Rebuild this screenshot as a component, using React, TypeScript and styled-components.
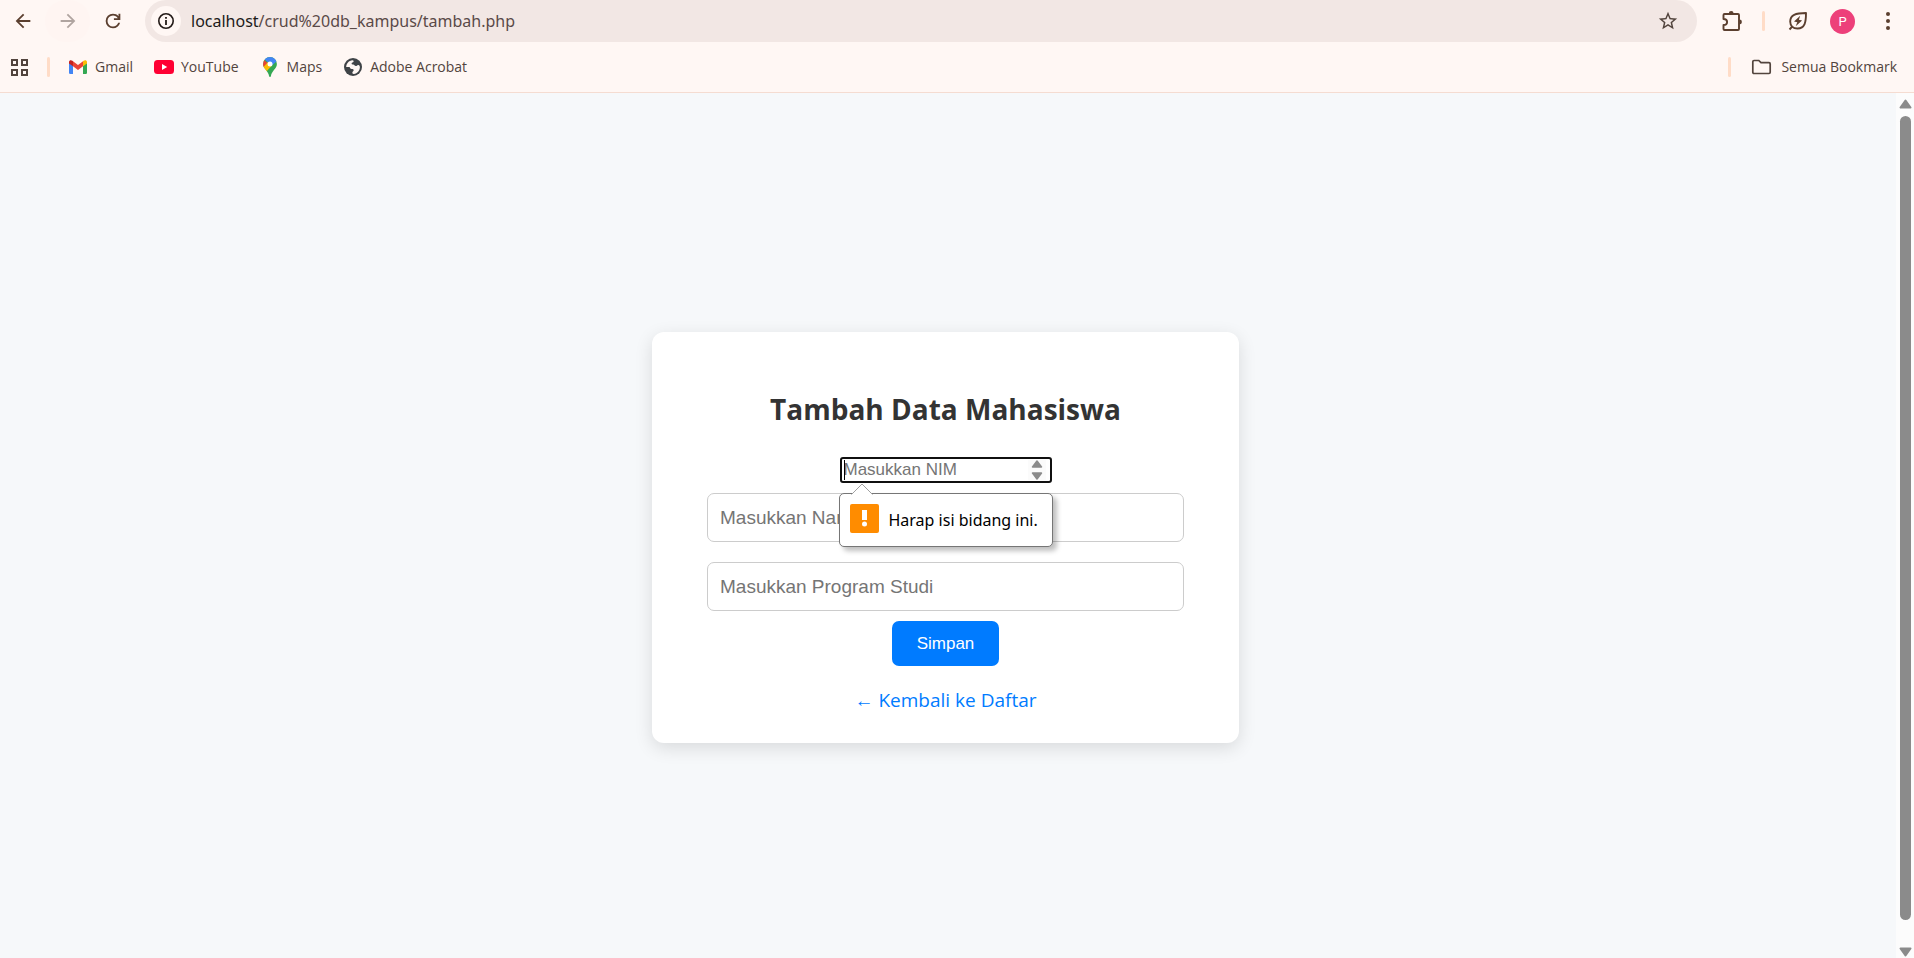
import React from "react";
import styled, { createGlobalStyle } from "styled-components";

const uiFont = '"Open Sans", "Noto Sans", sans-serif';
const chromeFont = '"Noto Sans", "Open Sans", sans-serif';
const formFont = '"Liberation Sans", Arial, sans-serif';

const GlobalStyle = createGlobalStyle`
  *, *::before, *::after { box-sizing: border-box; }
  body { margin: 0; font-family: ${uiFont}; }
  button, input { font: inherit; }
`;

const Window = styled.div`
  display: flex;
  flex-direction: column;
  height: 100vh;
  overflow: hidden;
  background: #f6f8fa;
`;

const BrowserHeader = styled.header`
  flex: none;
  background: #fff7f4;
  border-bottom: 1px solid #f5dcd1;
`;

const Toolbar = styled.div`
  display: flex;
  align-items: center;
  height: 42px;
  padding-right: 4px;
`;

const ToolButton = styled.button`
  display: flex;
  align-items: center;
  justify-content: center;
  width: 45px;
  height: 42px;
  padding: 0;
  border: 0;
  border-radius: 21px;
  background: none;
  color: #5b3f2f;

  &:disabled {
    background: #fff5f2;
    color: #b0a4a0;
  }
`;

const Omnibox = styled.div`
  display: flex;
  flex: 1;
  align-items: center;
  height: 42px;
  margin: 0 12px 0 10px;
  padding: 0 14px 0 6px;
  border-radius: 21px;
  background: #f2e7e4;
`;

const OmniButton = styled.button<{ $fill?: boolean }>`
  display: flex;
  align-items: center;
  justify-content: center;
  width: 30px;
  height: 30px;
  padding: 0;
  border: 0;
  border-radius: 50%;
  background: ${(p) => (p.$fill ? "#fff7f4" : "none")};
  color: ${(p) => (p.$fill ? "#231a17" : "#52443d")};
`;

const UrlText = styled.div`
  flex: 1;
  margin-left: 10px;
  outline: none;
  font-family: ${chromeFont};
  font-size: 16px;
  line-height: 24px;
  color: #5a4a48;
  white-space: nowrap;
`;

const UrlHost = styled.span`
  color: #201a19;
`;

const Divider = styled.span`
  width: 3px;
  height: 20px;
  border-radius: 2px;
  background: #ffdcc7;
`;

const ToolDivider = styled(Divider)`
  margin: 0 10px 0 8px;
`;

const Avatar = styled.span`
  display: flex;
  align-items: center;
  justify-content: center;
  width: 25px;
  height: 25px;
  border-radius: 50%;
  background: #ed407a;
  color: #fff;
  font: 13px/25px Roboto, sans-serif;
`;

const BookmarkBar = styled.nav`
  display: flex;
  align-items: center;
  height: 50px;
  padding: 0 17px 0 10px;
`;

const AppsButton = styled.button`
  display: flex;
  padding: 0;
  margin-right: 18px;
  border: 0;
  background: none;
  color: #52443d;
`;

const BookmarkList = styled.div`
  display: flex;
  flex: 1;
  gap: 21px;
  margin-left: 18px;
`;

const Bookmark = styled.a`
  display: flex;
  align-items: center;
  gap: 7px;
  font-size: 14px;
  line-height: 20px;
  color: #52443d;
  text-decoration: none;
`;

const AllBookmarks = styled.button`
  display: flex;
  align-items: center;
  gap: 9px;
  margin-left: 20px;
  padding: 0;
  border: 0;
  background: none;
  font-size: 14px;
  line-height: 20px;
  color: #52443d;
`;

const Viewport = styled.div`
  display: flex;
  flex: 1;
  min-height: 0;
`;

const Page = styled.main`
  display: flex;
  flex: 1;
  align-items: center;
  justify-content: center;
  padding: 24px 5px 0 0;
`;

const Card = styled.section`
  width: 100%;
  max-width: 587px;
  padding: 57px 55px 30px;
  border-radius: 12px;
  background: #fff;
  box-shadow: 0 5px 18px rgba(0, 0, 0, 0.12);
  text-align: center;
`;

const Title = styled.h2`
  margin: 0 0 28px;
  font-size: 28px;
  line-height: 40px;
  font-weight: 700;
  color: #333;
`;

const Form = styled.form`
  display: flex;
  flex-direction: column;
  align-items: center;
`;

const NumberField = styled.div`
  position: relative;
  display: flex;
  align-items: center;
  width: 212px;
  height: 26px;
  margin-bottom: 10px;
  padding: 0 4px 0 2px;
  border: 2px solid #101010;
  border-radius: 3px;
  background: #fff;
`;

const NumberInput = styled.input`
  flex: 1;
  min-width: 0;
  height: 22px;
  padding: 0;
  border: 0;
  outline: none;
  background: none;
  font-family: ${formFont};
  font-size: 17px;
  appearance: textfield;

  &::placeholder { color: #757575; opacity: 1; }
  &::-webkit-inner-spin-button { appearance: none; }
`;

const Caret = styled.span`
  position: absolute;
  top: 1px;
  left: 2px;
  width: 1px;
  height: 20px;
  background: #000;
`;

const TextInput = styled.input`
  width: 100%;
  height: 49px;
  padding: 0 12px;
  border: 1px solid #ccc;
  border-radius: 7px;
  background: #fff;
  font-family: ${formFont};
  font-size: 19px;

  & + & { margin-top: 20px; }
  &::placeholder { color: #757575; opacity: 1; }
`;

const SubmitButton = styled.button`
  height: 45px;
  margin-top: 10px;
  padding: 0 25px;
  border: 0;
  border-radius: 7px;
  background: #007bff;
  color: #fff;
  font-family: ${formFont};
  font-size: 17px;
`;

const BackLink = styled.a`
  display: block;
  margin-top: 21px;
  font-size: 19px;
  line-height: 26px;
  color: #007bff;
  text-decoration: none;
`;

const Tooltip = styled.div`
  position: absolute;
  z-index: 1;
  top: 34px;
  left: -3px;
  display: flex;
  align-items: flex-start;
  gap: 10px;
  min-width: 214px;
  height: 54px;
  padding: 10px;
  border: 1px solid #767676;
  border-radius: 5px;
  background: #fff;
  box-shadow: 4px 4px 5px rgba(0, 0, 0, 0.25);
  font-family: ${chromeFont};
  font-size: 16px;
  line-height: 32px;
  color: #000;
  white-space: nowrap;
`;

const TooltipPointer = styled.svg`
  position: absolute;
  top: -11px;
  left: 11px;
`;

const ScrollTrack = styled.div`
  display: flex;
  flex-direction: column;
  align-items: center;
  width: 18px;
  padding: 6px 0 1px;
  background: #fcfcfc;
`;

const ScrollThumb = styled.div`
  flex: 1;
  width: 11px;
  margin: 7px 0 27px;
  border-radius: 6px;
  background: #8b8b8b;
`;

const Glyph = ({ d, size = 22 }: { d: string; size?: number }) => (
  <svg width={size} height={size} viewBox="0 0 24 24" fill="currentColor" aria-hidden="true">
    <path d={d} />
  </svg>
);

const backPath = "M20 11H7.83l5.59-5.59L12 4l-8 8 8 8 1.41-1.41L7.83 13H20z";
const forwardPath = "M4 11h12.17l-5.59-5.59L12 4l8 8-8 8-1.41-1.41L16.17 13H4z";
const reloadPath =
  "M12 20q-3.35 0-5.675-2.325T4 12t2.325-5.675T12 4q1.725 0 3.3.713T18 6.75V4h2v7h-7V9h4.2q-.8-1.4-2.187-2.2T12 6Q9.5 6 7.75 7.75T6 12t1.75 4.25T12 18q1.925 0 3.475-1.1T17.65 14h2.1q-.7 2.65-2.85 4.325T12 20";
const starPath =
  "M22 9.24l-7.19-.62L12 2 9.19 8.63 2 9.24l5.46 4.73L5.82 21 12 17.27 18.18 21l-1.63-7.03L22 9.24zM12 15.4l-3.76 2.27 1-4.28-3.32-2.88 4.38-.38L12 6.1l1.71 4.04 4.38.38-3.32 2.88 1 4.28L12 15.4z";

const InfoIcon = () => (
  <svg width="18" height="18" viewBox="0 0 18 18" aria-hidden="true">
    <circle cx="9" cy="9" r="7.2" fill="none" stroke="currentColor" strokeWidth="1.6" />
    <path d="M8.1 8h1.8v5H8.1zM8.1 5h1.8v1.8H8.1z" fill="currentColor" />
  </svg>
);

const ExtensionIcon = () => (
  <svg width="24" height="24" viewBox="0 0 24 24" aria-hidden="true">
    <path
      d="M4.5 5H18q1 0 1 1v14q0 1-1 1H4.500q-1 0-1-1v-4c2.400 0 3.600-1.100 3.600-3s-1.200-3-3.600-3V6q0-1 1-1z"
      fill="none"
      stroke="currentColor"
      strokeWidth="1.9"
      strokeLinejoin="round"
    />
    <path d="M8.800 4.500a2.400 2.400 0 0 1 4.800 0zM19.500 10.600a2.400 2.400 0 0 1 0 4.800z" fill="currentColor" />
  </svg>
);

const LeafIcon = () => (
  <svg width="22" height="22" viewBox="0 0 22 22" aria-hidden="true">
    <path
      d="M19 3C19 12 18 18.500 10.500 18.500C6 18.500 3.200 15.700 3.200 11.500C3.200 5 8.500 3 19 3zM5.300 16.500L2.500 19.500"
      fill="none"
      stroke="currentColor"
      strokeWidth="1.9"
      strokeLinejoin="round"
    />
    <path d="M13.200 5.800L7 11.600l3.300.7-1.600 3.900 6.400-5.600-3.200-.8z" fill="currentColor" />
  </svg>
);

const MenuIcon = () => (
  <svg width="6" height="20" viewBox="0 0 6 20" fill="currentColor" aria-hidden="true">
    <circle cx="3" cy="3" r="2" />
    <circle cx="3" cy="10" r="2" />
    <circle cx="3" cy="17" r="2" />
  </svg>
);

const AppsIcon = () => (
  <svg width="19" height="20" viewBox="0 0 19 20" fill="none" stroke="currentColor" strokeWidth="2" aria-hidden="true">
    <path d="M2 3h5v5H2zM12 3h5v5h-5zM2 13h5v5H2zM12 13h5v5h-5z" />
  </svg>
);

const GmailIcon = () => (
  <svg width="20" height="20" viewBox="0 0 20 20" aria-hidden="true">
    <path d="M1 5.500v10.300q0 1.200 1.200 1.200H5V8.500z" fill="#4285f4" />
    <path d="M19 5.500v10.300q0 1.200-1.200 1.200H15V8.500z" fill="#34a853" />
    <path d="M5 4.300l5 3.800 5-3.800v5L10 13 5 9.300z" fill="#ea4335" />
    <path d="M1 5.200C1 3 3.300 2.800 4.400 3.800L5 4.300v5L1 6.500z" fill="#c5221f" />
    <path d="M19 5.200c0-2.200-2.300-2.400-3.400-1.400l-.6.5v5l4-2.800z" fill="#fbbc04" />
  </svg>
);

const YouTubeIcon = () => (
  <svg width="20" height="20" viewBox="0 0 20 20" aria-hidden="true">
    <rect y="3" width="20" height="14" rx="3.500" fill="#ff0033" />
    <path d="M8 7l5.200 3L8 13z" fill="#fff" />
  </svg>
);

const MapsIcon = () => (
  <svg width="20" height="20" viewBox="0 0 20 20" aria-hidden="true">
    <defs>
      <clipPath id="pin">
        <path d="M10 0a6.900 6.900 0 0 1 6.900 6.900c0 4.800-5.300 6.600-6 12.300q-.2.800-.9.800t-.9-.8c-.7-5.700-6-7.500-6-12.300A6.900 6.900 0 0 1 10 0z" />
      </clipPath>
    </defs>
    <g clipPath="url(#pin)">
      <path d="M0 0h20v20H0z" fill="#34a853" />
      <path d="M3 2.200L8.500 6.800 2 12.500V2z" fill="#ea4335" />
      <path d="M4.500 2.300L8.500 6 12.500 8 18 3 12-1H6z" fill="#4285f4" />
      <path d="M2 11.500L8 5l3.500 4L5 16z" fill="#fbbc04" />
    </g>
    <circle cx="10" cy="6.900" r="2.500" fill="#fff" />
  </svg>
);

const GlobeIcon = () => (
  <svg width="20" height="20" viewBox="0 0 20 20" aria-hidden="true">
    <circle cx="10" cy="10" r="9" fill="#3f4347" />
    <path
      d="M9.500 3.200c1 .1 1.400.7 1 1.600-.4.800-1.700.7-1.900 1.600-.2.800.7 1 1.600 1.100 1.200.1 1.300 1.500 2.600 1.600 1.300 0 1.400-1.300 2.600-1.100.9.200 1.500 1 1.500 2.200-.2 3.500-2.500 6.200-6 6.700-1.200.1-1.700-.6-1.500-1.600.2-.9 1.300-1 1.300-2s-.8-1.300-2-1.300c-1.400 0-1.900-.9-2-1.900H3.200C3.300 6.500 5.800 3.500 9.500 3.200z"
      fill="#fff7f4"
    />
  </svg>
);

const FolderIcon = () => (
  <svg width="21" height="20" viewBox="0 0 21 20" aria-hidden="true">
    <path
      d="M3 3.500h4.800l2.200 2.200h8q1.200 0 1.200 1.200v8.400q0 1.200-1.200 1.200H3q-1.200 0-1.200-1.200V4.700q0-1.200 1.200-1.200z"
      fill="none"
      stroke="currentColor"
      strokeWidth="1.700"
    />
  </svg>
);

const WarningIcon = () => (
  <svg width="29" height="29" viewBox="0 0 29 29" aria-hidden="true">
    <rect width="29" height="29" rx="2" fill="#ff8c00" />
    <path d="M12 6h5v10h-5z" fill="#fff" />
    <circle cx="14.500" cy="20" r="2.500" fill="#fff" />
  </svg>
);

const Spinner = () => (
  <svg width="18" height="22" viewBox="0 0 18 22" aria-hidden="true">
    <path d="M0 1h18v20H0z" fill="#fbfbfb" />
    <path
      d="M9 2l4.500 6h-9zM9 20l4.500-6h-9z"
      fill="#8b8b8b"
      stroke="#8b8b8b"
      strokeWidth="1.500"
      strokeLinejoin="round"
    />
  </svg>
);

const ScrollArrow = ({ down = false }: { down?: boolean }) => (
  <svg width="13" height="10" viewBox="0 0 13 10" aria-hidden="true">
    <path
      d={down ? "M1.500 1.500h10L6.500 8.500z" : "M1.500 8.500h10L6.500 1.500z"}
      fill="#8b8b8b"
      stroke="#8b8b8b"
      strokeWidth="2"
      strokeLinejoin="round"
    />
  </svg>
);

const bookmarks = [
  { label: "Gmail", Icon: GmailIcon },
  { label: "YouTube", Icon: YouTubeIcon },
  { label: "Maps", Icon: MapsIcon },
  { label: "Adobe Acrobat", Icon: GlobeIcon },
];

export default function App() {
  return (
    <Window>
      <GlobalStyle />
      <BrowserHeader>
        <Toolbar>
          <ToolButton aria-label="Kembali"><Glyph d={backPath} /></ToolButton>
          <ToolButton aria-label="Maju" disabled><Glyph d={forwardPath} /></ToolButton>
          <ToolButton aria-label="Muat ulang"><Glyph d={reloadPath} /></ToolButton>
          <Omnibox>
            <OmniButton $fill aria-label="Info situs"><InfoIcon /></OmniButton>
            <UrlText role="textbox" aria-label="Alamat" contentEditable suppressContentEditableWarning spellCheck={false}>
              <UrlHost>localhost</UrlHost>/crud%20db_kampus/tambah.php
            </UrlText>
            <OmniButton aria-label="Tambahkan bookmark"><Glyph d={starPath} /></OmniButton>
          </Omnibox>
          <ToolButton aria-label="Ekstensi"><ExtensionIcon /></ToolButton>
          <ToolDivider />
          <ToolButton aria-label="Penghemat energi"><LeafIcon /></ToolButton>
          <ToolButton aria-label="Profil"><Avatar>P</Avatar></ToolButton>
          <ToolButton aria-label="Menu"><MenuIcon /></ToolButton>
        </Toolbar>
        <BookmarkBar>
          <AppsButton aria-label="Aplikasi"><AppsIcon /></AppsButton>
          <Divider />
          <BookmarkList>
            {bookmarks.map(({ label, Icon }) => (
              <Bookmark href="#" key={label}><Icon />{label}</Bookmark>
            ))}
          </BookmarkList>
          <Divider />
          <AllBookmarks><FolderIcon />Semua Bookmark</AllBookmarks>
        </BookmarkBar>
      </BrowserHeader>
      <Viewport>
        <Page>
          <Card>
            <Title>Tambah Data Mahasiswa</Title>
            <Form noValidate>
              <NumberField>
                <NumberInput type="number" aria-label="NIM" placeholder="Masukkan NIM" required />
                <Caret />
                <Spinner />
                <Tooltip role="alert">
                  <TooltipPointer width="22" height="12" viewBox="0 0 22 12" aria-hidden="true">
                    <path d="M0.500 11.500L11 1L21.500 11.500V12H0.500z" fill="#fff" />
                    <path d="M0.500 11.500L11 1L21.500 11.500" fill="none" stroke="#a0a0a0" />
                  </TooltipPointer>
                  <WarningIcon />
                  Harap isi bidang ini.
                </Tooltip>
              </NumberField>
              <TextInput type="text" aria-label="Nama" placeholder="Masukkan Nama" required />
              <TextInput type="text" aria-label="Program Studi" placeholder="Masukkan Program Studi" required />
              <SubmitButton type="submit">Simpan</SubmitButton>
            </Form>
            <BackLink href="#">← Kembali ke Daftar</BackLink>
          </Card>
        </Page>
        <ScrollTrack aria-hidden="true">
          <ScrollArrow />
          <ScrollThumb />
          <ScrollArrow down />
        </ScrollTrack>
      </Viewport>
    </Window>
  );
}
